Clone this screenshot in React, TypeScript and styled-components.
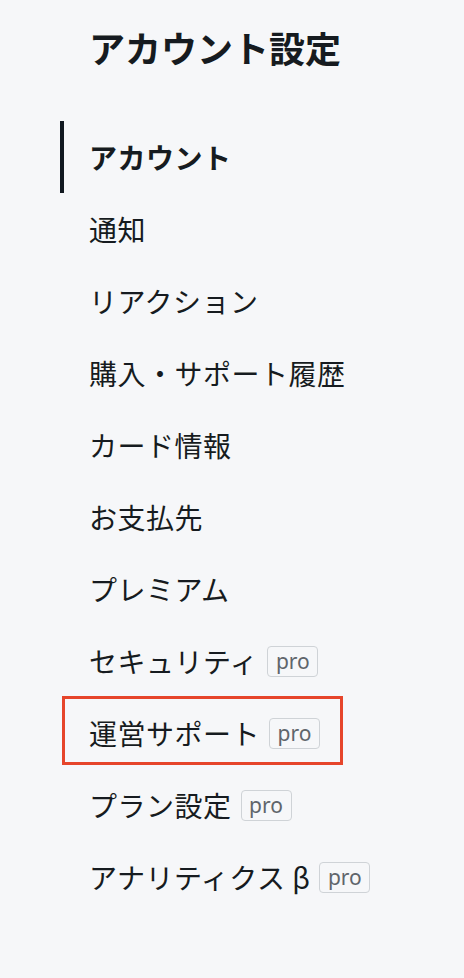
import React from "react"
import styled, { createGlobalStyle } from "styled-components"

const GlobalStyle = createGlobalStyle`
  html, body {
    margin: 0;
    padding: 0;
    background: #f6f7f9;
  }
  body {
    font-family: "Noto Sans CJK JP", "Noto Sans", sans-serif;
    color: #161b20;
  }
`

type NavItemData = {
  label: string
  pro?: boolean
  active?: boolean
  highlight?: boolean
}

const items: NavItemData[] = [
  { label: "アカウント", active: true },
  { label: "通知" },
  { label: "リアクション" },
  { label: "購入・サポート履歴" },
  { label: "カード情報" },
  { label: "お支払先" },
  { label: "プレミアム" },
  { label: "セキュリティ", pro: true },
  { label: "運営サポート", pro: true, highlight: true },
  { label: "プラン設定", pro: true },
  { label: "アナリティクス β", pro: true },
]

const Sidebar = styled.aside`
  min-height: 978px;
  padding: 20px 0 0 60px;
  box-sizing: border-box;
`

const Title = styled.h1`
  margin: 0 0 47px 29px;
  font-size: 36px;
  line-height: 54px;
  font-weight: 700;
`

const NavList = styled.ul`
  list-style: none;
  margin: 0;
  padding: 0;
`

const NavItem = styled.li<{ $active?: boolean; $highlight?: boolean }>`
  position: relative;
  display: flex;
  align-items: center;
  gap: 9px;
  height: 72px;
  padding-left: 25px;
  border-left: 4px solid ${(p) => (p.$active ? "#111820" : "transparent")};
  box-sizing: border-box;
  font-size: 28px;
  letter-spacing: 0.5px;
  font-weight: ${(p) => (p.$active ? 700 : 400)};
  ${(p) =>
    p.$highlight &&
    `
    &::after {
      content: "";
      position: absolute;
      left: -2px;
      top: -1px;
      width: 281px;
      height: 69px;
      border: 3px solid #e6452b;
      box-sizing: border-box;
      pointer-events: none;
    }
  `}
`

const ProBadge = styled.span`
  display: inline-flex;
  align-items: center;
  justify-content: center;
  width: 51px;
  height: 31px;
  box-sizing: border-box;
  border: 1px solid #cfd3d7;
  border-radius: 4px;
  font-family: "Noto Sans", sans-serif;
  font-size: 21px;
  letter-spacing: 0;
  color: #5f656b;
  line-height: 1;
`

export default function App() {
  return (
    <>
      <GlobalStyle />
      <Sidebar>
        <Title>アカウント設定</Title>
        <NavList>
          {items.map((item) => (
            <NavItem
              key={item.label}
              $active={item.active}
              $highlight={item.highlight}
            >
              <span>{item.label}</span>
              {item.pro && <ProBadge>pro</ProBadge>}
            </NavItem>
          ))}
        </NavList>
      </Sidebar>
    </>
  )
}
